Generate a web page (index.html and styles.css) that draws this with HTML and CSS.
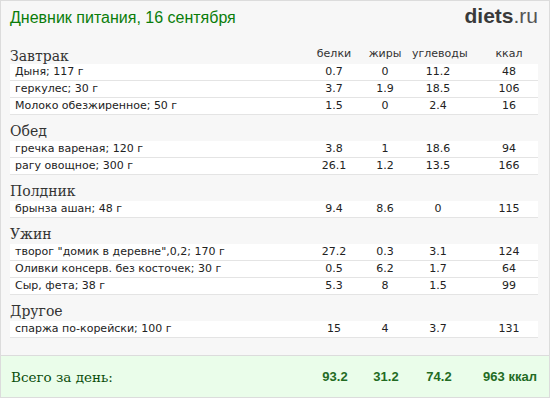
FILE: index.html
```html
<!DOCTYPE html>
<html lang="ru">
<head>
<meta charset="utf-8">
<title>Дневник питания</title>
<link rel="stylesheet" href="styles.css">
</head>
<body>
<div class="page">
  <header class="top">
    <h1 class="title">Дневник питания, 16 сентября</h1>
    <div class="logo"><b>diets</b>.ru</div>
  </header>

  <section class="meal">
    <div class="grid head">
      <h2 class="meal-name">Завтрак</h2>
      <span class="num lbl">белки</span>
      <span class="num lbl">жиры</span>
      <span class="num lbl">углеводы</span>
      <span class="num kcal lbl">ккал</span>
    </div>
    <div class="grid row"><span class="food">Дыня; 117 г</span><span class="num">0.7</span><span class="num">0</span><span class="num">11.2</span><span class="num kcal">48</span></div>
    <div class="grid row"><span class="food">геркулес; 30 г</span><span class="num">3.7</span><span class="num">1.9</span><span class="num">18.5</span><span class="num kcal">106</span></div>
    <div class="grid row"><span class="food">Молоко обезжиренное; 50 г</span><span class="num">1.5</span><span class="num">0</span><span class="num">2.4</span><span class="num kcal">16</span></div>
  </section>

  <section class="meal">
    <div class="grid head"><h2 class="meal-name">Обед</h2></div>
    <div class="grid row"><span class="food">гречка вареная; 120 г</span><span class="num">3.8</span><span class="num">1</span><span class="num">18.6</span><span class="num kcal">94</span></div>
    <div class="grid row"><span class="food">рагу овощное; 300 г</span><span class="num">26.1</span><span class="num">1.2</span><span class="num">13.5</span><span class="num kcal">166</span></div>
  </section>

  <section class="meal">
    <div class="grid head"><h2 class="meal-name">Полдник</h2></div>
    <div class="grid row"><span class="food">брынза ашан; 48 г</span><span class="num">9.4</span><span class="num">8.6</span><span class="num">0</span><span class="num kcal">115</span></div>
  </section>

  <section class="meal">
    <div class="grid head"><h2 class="meal-name">Ужин</h2></div>
    <div class="grid row"><span class="food">творог "домик в деревне",0,2; 170 г</span><span class="num">27.2</span><span class="num">0.3</span><span class="num">3.1</span><span class="num kcal">124</span></div>
    <div class="grid row"><span class="food">Оливки консерв. без косточек; 30 г</span><span class="num">0.5</span><span class="num">6.2</span><span class="num">1.7</span><span class="num kcal">64</span></div>
    <div class="grid row"><span class="food">Сыр, фета; 38 г</span><span class="num">5.3</span><span class="num">8</span><span class="num">1.5</span><span class="num kcal">99</span></div>
  </section>

  <section class="meal">
    <div class="grid head"><h2 class="meal-name">Другое</h2></div>
    <div class="grid row"><span class="food">спаржа по-корейски; 100 г</span><span class="num">15</span><span class="num">4</span><span class="num">3.7</span><span class="num kcal">131</span></div>
  </section>

  <footer class="total">
    <div class="grid">
      <span class="total-label">Всего за день:</span>
      <span class="num tv">93.2</span>
      <span class="num tv">31.2</span>
      <span class="num tv">74.2</span>
      <span class="num kcal tv">963 ккал</span>
    </div>
  </footer>
</div>
</body>
</html>
```
FILE: styles.css
```css
* { box-sizing: border-box; }
html, body { margin: 0; padding: 0; background: #ffffff; }
.page {
  width: 550px;
  height: 398px;
  border: 1px solid #dcdcdc;
  background: #f7f7f7;
  display: flex;
  flex-direction: column;
  font-family: "DejaVu Sans", Verdana, sans-serif;
  font-size: 11px;
  color: #222;
  overflow: hidden;
}
.top {
  display: flex;
  align-items: baseline;
  justify-content: space-between;
  padding: 5px 11px 0 9px;
  height: 43px;
}
.title {
  margin: 0;
  font-family: "Liberation Sans", Arial, sans-serif;
  font-weight: normal;
  font-size: 16px;
  line-height: 20px;
  color: #0a7d0a;
}
.logo {
  font-family: "Liberation Sans", Arial, sans-serif;
  font-size: 21px;
  line-height: 20px;
  color: #555;
}
.logo b { color: #3a3a3a; font-weight: bold; }
.meal { margin: 0 11px 6px 9px; }
.grid {
  display: grid;
  grid-template-columns: 300px 48px 54px 52px 73px;
  align-items: center;
}
.head { height: 20px; }
.meal-name {
  margin: 0;
  font-family: "DejaVu Serif", Georgia, serif;
  font-weight: normal;
  font-size: 14px;
  line-height: 20px;
  color: #333;
}
.lbl { color: #333; line-height: 20px; padding-bottom: 4px; }
.row {
  height: 17px;
  background: #fff;
  border-bottom: 1px solid #e4e4e4;
  line-height: 16px;
}
.food { padding-left: 5px; white-space: nowrap; }
.num { text-align: center; }
.kcal { padding-left: 17px; }
.total {
  margin-top: auto;
  height: 42px;
  border-top: 1px solid #dcdcdc;
  background: #eafdea;
  padding: 0 11px 0 10px;
  display: flex;
  flex-direction: column;
  justify-content: center;
}
.total-label {
  font-family: "DejaVu Serif", Georgia, serif;
  font-size: 13.5px;
  color: #0b4d0b;
}
.tv {
  font-family: "Liberation Sans", Arial, sans-serif;
  font-weight: bold;
  font-size: 13px;
  color: #236b23;
}
```
